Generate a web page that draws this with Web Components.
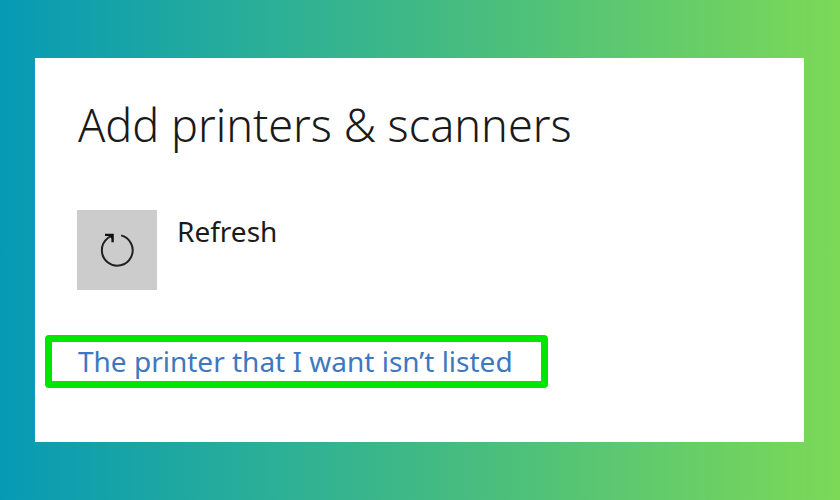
<!DOCTYPE html>
<html lang="en">
<head>
<meta charset="utf-8">
<meta name="viewport" content="width=device-width, initial-scale=1">
<title>Add printers &amp; scanners</title>
<style>
  body {
    margin: 0;
    font-family: "Noto Sans", "Open Sans", sans-serif;
    color: #1a1a1a;
  }
</style>
</head>
<body>
<settings-page>
  <settings-card heading="Add printers &amp; scanners">
    <refresh-action>Refresh</refresh-action>
    <highlight-link href="#add-manually">The printer that I want isn’t listed</highlight-link>
  </settings-card>
</settings-page>

<script>
// <settings-page> : gradient backdrop, stretches the card inside it
class SettingsPage extends HTMLElement {
  constructor() {
    super();
    this.attachShadow({ mode: "open" });
  }

  connectedCallback() {
    this.shadowRoot.innerHTML = `
      <style>
        :host {
          display: grid;
          box-sizing: border-box;
          min-height: 100vh;
          padding: 58px 36px 58px 35px;
          background: linear-gradient(90deg, #069ab5 0%, #2baf97 32%, #46bc80 55%, #7cd957 100%);
        }
      </style>
      <slot></slot>
    `;
  }
}

// <settings-card heading="..."> : white panel with a title and stacked rows
class SettingsCard extends HTMLElement {
  constructor() {
    super();
    this.attachShadow({ mode: "open" });
  }

  connectedCallback() {
    this.shadowRoot.innerHTML = `
      <style>
        :host {
          display: block;
          padding: 35px 10px;
          background: #fff;
        }
        h1 {
          margin: 0 0 53px;
          padding-left: 33px;
          font-size: 45px;
          font-weight: 350;
          line-height: 64px;
        }
        .rows {
          display: flex;
          flex-direction: column;
          align-items: flex-start;
          gap: 45px;
        }
      </style>
      <h1></h1>
      <div class="rows"><slot></slot></div>
    `;
    this.shadowRoot.querySelector("h1").textContent = this.getAttribute("heading");
  }
}

// <refresh-action> : grey tile with the circular arrow, label beside it
class RefreshAction extends HTMLElement {
  constructor() {
    super();
    this.attachShadow({ mode: "open" });
  }

  connectedCallback() {
    this.shadowRoot.innerHTML = `
      <style>
        :host { display: block; padding-left: 32px; }
        button {
          display: flex;
          align-items: flex-start;
          gap: 20px;
          padding: 0;
          border: 0;
          background: none;
          color: inherit;
          font: inherit;
          font-size: 28px;
          line-height: 42px;
          cursor: pointer;
        }
        .tile {
          display: grid;
          place-items: center;
          width: 80px;
          height: 80px;
          background: #ccc;
        }
        svg { display: block; }
      </style>
      <button type="button">
        <span class="tile">
          <svg width="40" height="40" viewBox="0 0 40 40" fill="none" stroke="#222" stroke-width="2" aria-hidden="true">
            <path d="M24.2 5.4A15.4 15.4 0 1 1 10.6 8.3L15.5 4.8"/>
            <path d="M8 4.9H15.6V12.2" stroke="#111" stroke-width="2.4"/>
            <path d="M11 5H16V10Z" fill="#111" stroke="none"/>
          </svg>
        </span>
        <span><slot></slot></span>
      </button>
    `;
  }
}

// <highlight-link href="..."> : link inside a thick green frame
class HighlightLink extends HTMLElement {
  constructor() {
    super();
    this.attachShadow({ mode: "open" });
  }

  connectedCallback() {
    this.shadowRoot.innerHTML = `
      <style>
        :host {
          display: block;
          padding: 0 28px 0 26px;
          border: 7px solid #00e600;
          border-radius: 4px;
        }
        a {
          display: block;
          color: #3e78c0;
          font-size: 28px;
          line-height: 39px;
          text-decoration: none;
        }
      </style>
      <a><slot></slot></a>
    `;
    this.shadowRoot.querySelector("a").href = this.getAttribute("href");
  }
}

customElements.define("settings-page", SettingsPage);
customElements.define("settings-card", SettingsCard);
customElements.define("refresh-action", RefreshAction);
customElements.define("highlight-link", HighlightLink);
</script>
</body>
</html>
